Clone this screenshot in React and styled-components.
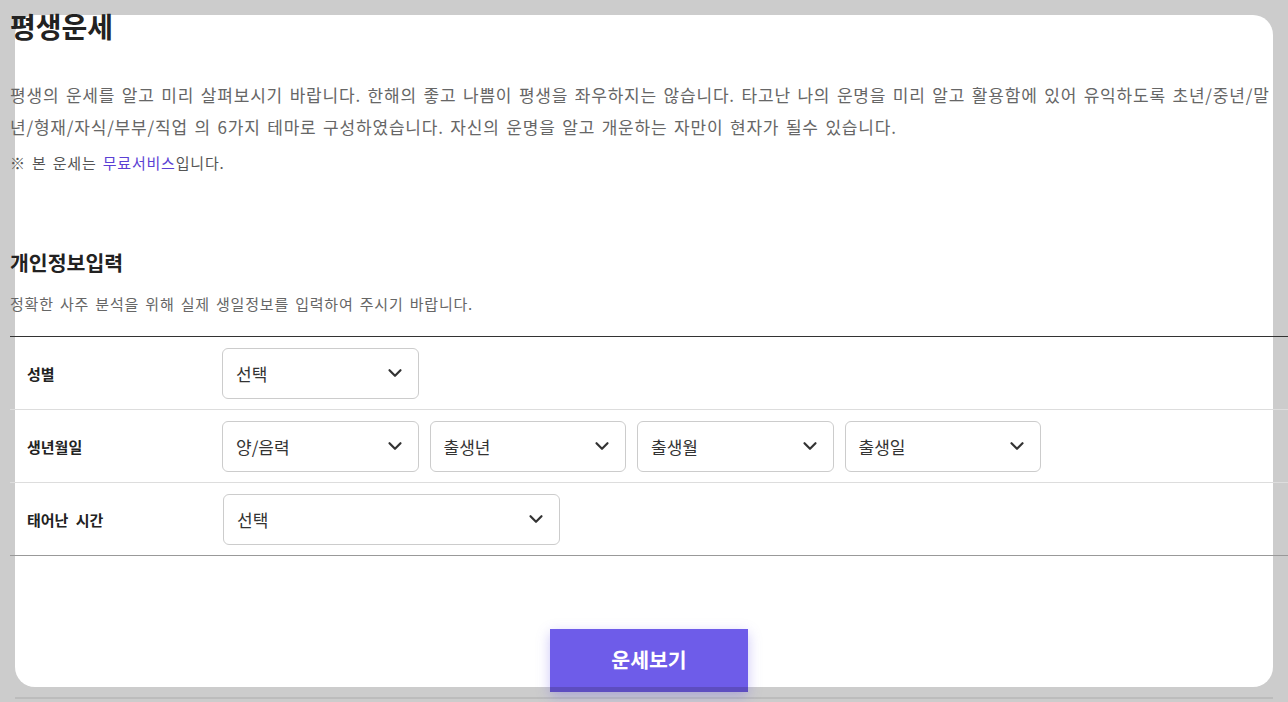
import React from 'react';
import styled, {createGlobalStyle} from 'styled-components';
import {ChevronDown} from 'lucide-react';

const GlobalStyle = createGlobalStyle`
  html, body {
    margin: 0;
    padding: 0;
    background: #cccccc;
    font-family: "Noto Sans CJK KR", "Noto Sans", sans-serif;
    color: #222;
  }
  body {
    height: 702px;
    overflow: hidden;
  }
`;

const Page = styled.div`
  padding: 15px 15px 0 15px;
`;

const Card = styled.div`
  background: #fff;
  border-radius: 20px;
  height: 672px;
`;

const Content = styled.div`
  margin: 0 -15px 0 -5px;
  position: relative;
  top: -8px;
`;

const Title = styled.h1`
  margin: 0;
  font-size: 28px;
  line-height: 38px;
  font-weight: 700;
  color: #222;
`;

const Intro = styled.p`
  margin: 34px 0 0;
  font-size: 17px;
  line-height: 32px;
  color: #666;
  letter-spacing: 0.8px;
  word-spacing: 2px;
`;

const Notice = styled.p`
  margin: 9px 0 0;
  font-size: 15px;
  line-height: 22px;
  color: #555;
  letter-spacing: 0.8px;
  word-spacing: 2px;
  a {
    color: #5b3fd4;
    text-decoration: none;
  }
`;

const SectionTitle = styled.h2`
  margin: 74px 0 0;
  font-size: 20.5px;
  line-height: 28px;
  font-weight: 700;
  color: #222;
`;

const SectionDesc = styled.p`
  margin: 17px 0 0;
  font-size: 15px;
  line-height: 22px;
  color: #666;
  letter-spacing: 0.8px;
  word-spacing: 2px;
`;

const Table = styled.div`
  margin-top: 21px;
  border-top: 1px solid #333;
  border-bottom: 1px solid #999;
`;

const Row = styled.div`
  display: flex;
  align-items: center;
  height: 72px;
  & + & {
    border-top: 1px solid #ddd;
  }
`;

const Label = styled.div`
  width: 212px;
  padding-left: 17px;
  box-sizing: border-box;
  font-size: 15px;
  font-weight: 700;
  color: #222;
  word-spacing: 4px;
`;

const Fields = styled.div`
  display: flex;
  gap: 11px;
  padding-left: ${p => p.$shift || 0}px;
`;

const SelectBox = styled.div`
  width: ${p => p.$wide ? 337 : 196.5}px;
  height: 51px;
  box-sizing: border-box;
  border: 1px solid #ccc;
  border-radius: 6px;
  display: flex;
  align-items: center;
  justify-content: space-between;
  padding: 0 12px 0 13px;
  font-size: 17px;
  color: #333;
  svg {
    color: #333;
  }
`;

const ButtonWrap = styled.div`
  display: flex;
  justify-content: center;
  margin-top: 73px;
`;

const Submit = styled.button`
  width: 198px;
  height: 63px;
  border: none;
  border-bottom: 5px solid #5d4dc0;
  background: #6e5ce9;
  color: #fff;
  font-family: inherit;
  font-size: 20.5px;
  font-weight: 700;
  box-shadow: 0 4px 12px rgba(110, 92, 233, 0.35);
  padding-top: 3px;
`;

const BottomLine = styled.div`
  margin-top: 10px;
  height: 2px;
  background: #bcbcbc;
`;

const Select = ({text, wide}) => (
    <SelectBox $wide={wide}>
        <span>{text}</span>
        <ChevronDown size={22} strokeWidth={2.4} />
    </SelectBox>
);

const App = () => {
    return(
        <>
        <GlobalStyle />
        <Page>
            <Card>
                <Content>
                    <Title>평생운세</Title>
                    <Intro>
                        평생의 운세를 알고 미리 살펴보시기 바랍니다. 한해의 좋고 나쁨이 평생을 좌우하지는 않습니다. 타고난 나의 운명을 미리 알고 활용함에 있어 유익하도록 초년/중년/말년/형재/자식/부부/직업 의 6가지 테마로 구성하였습니다. 자신의 운명을 알고 개운하는 자만이 현자가 될수 있습니다.
                    </Intro>
                    <Notice>※ 본 운세는 <a href="#">무료서비스</a>입니다.</Notice>

                    <SectionTitle>개인정보입력</SectionTitle>
                    <SectionDesc>정확한 사주 분석을 위해 실제 생일정보를 입력하여 주시기 바랍니다.</SectionDesc>

                    <Table>
                        <Row>
                            <Label>성별</Label>
                            <Fields>
                                <Select text="선택" />
                            </Fields>
                        </Row>
                        <Row>
                            <Label>생년월일</Label>
                            <Fields>
                                <Select text="양/음력" />
                                <Select text="출생년" />
                                <Select text="출생월" />
                                <Select text="출생일" />
                            </Fields>
                        </Row>
                        <Row>
                            <Label>태어난 시간</Label>
                            <Fields $shift={1}>
                                <Select text="선택" wide />
                            </Fields>
                        </Row>
                    </Table>

                    <ButtonWrap>
                        <Submit>운세보기</Submit>
                    </ButtonWrap>
                </Content>
            </Card>
            <BottomLine />
        </Page>
        </>
    )
}

export default App;
